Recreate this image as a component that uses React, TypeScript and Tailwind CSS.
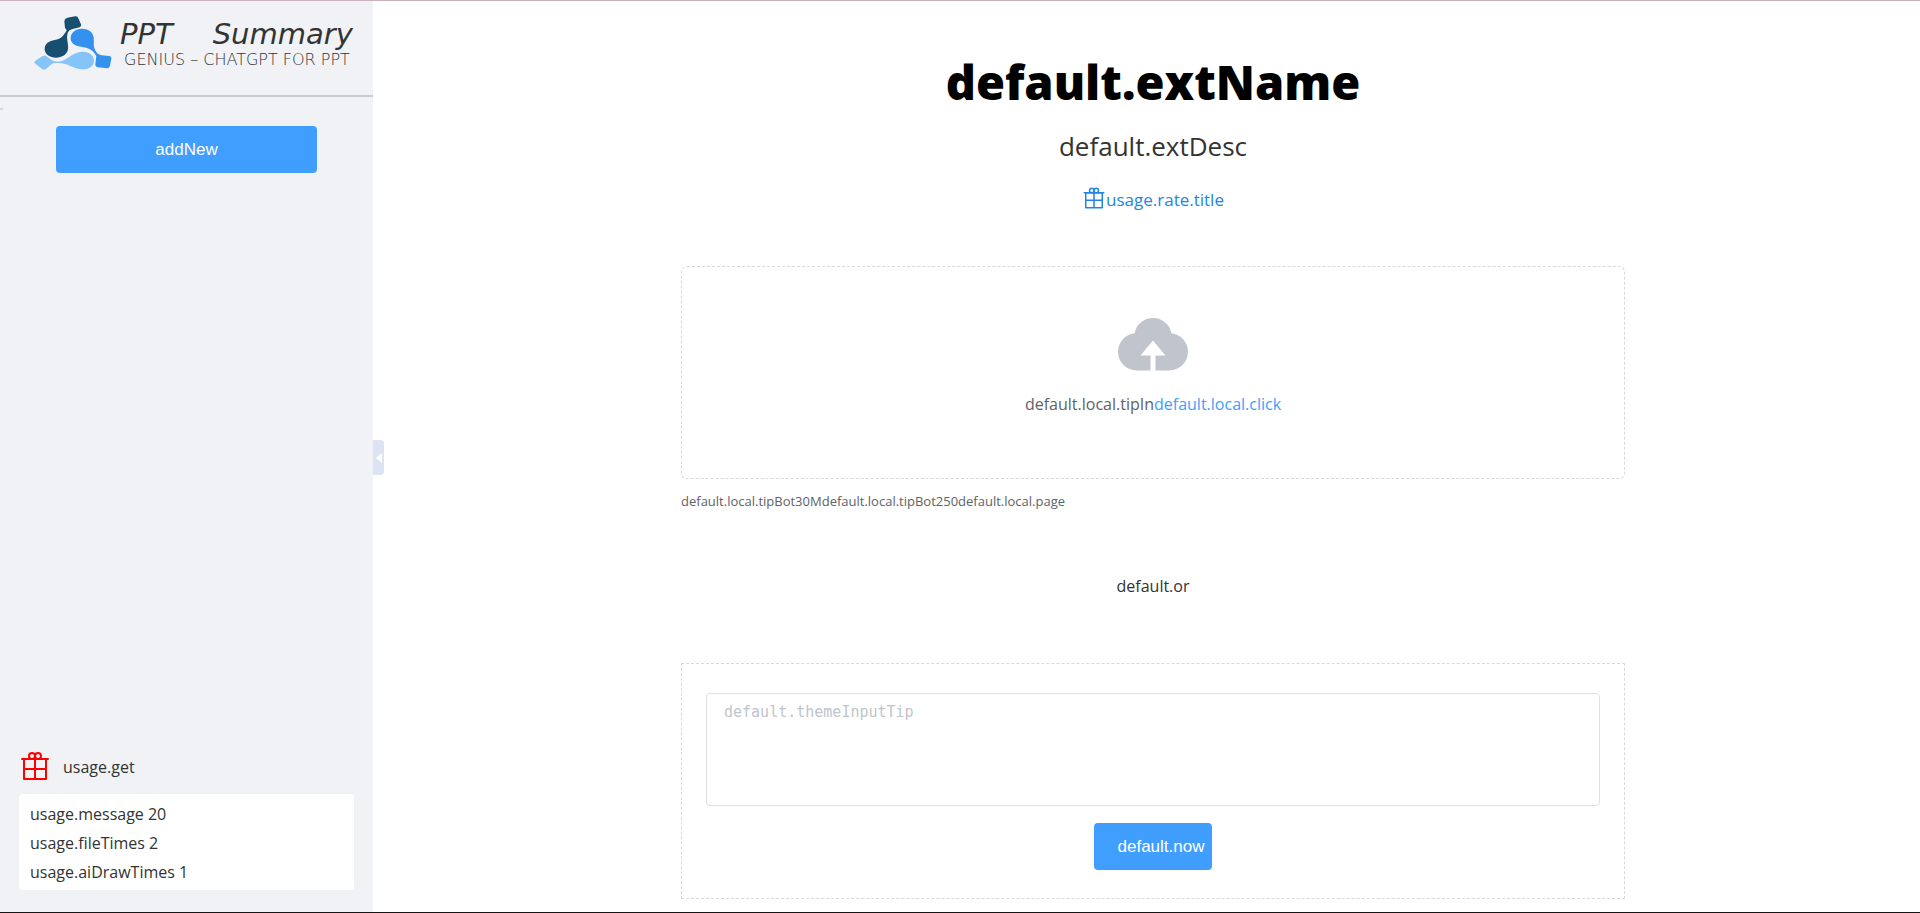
import React from "react";

function GiftIcon({ className }: { className: string }) {
  return (
    <svg viewBox="0 0 1024 1024" fill="currentColor" className={className} aria-hidden="true">
      <path d="M480 896V640H192v-64h288V320H192v576h288zm64 0h288V640H544v256zm0-320h288V320H544v256zM128 256h768v672a32 32 0 0 1-32 32H160a32 32 0 0 1-32-32V256z" fillRule="evenodd" />
      <path d="M96 256h832q32 0 32 32t-32 32H96q-32 0-32-32t32-32z" />
      <path d="M416 256a64 64 0 1 0 0-128 64 64 0 0 0 0 128zm0 64a128 128 0 1 1 0-256 128 128 0 0 1 0 256z" />
      <path d="M608 256a64 64 0 1 0 0-128 64 64 0 0 0 0 128zm0 64a128 128 0 1 1 0-256 128 128 0 0 1 0 256z" />
    </svg>
  );
}

function UploadIcon() {
  return (
    <svg viewBox="0 0 1024 1024" className="size-20 text-[#c0c4cc]" fill="currentColor" aria-hidden="true">
      <path d="M544 864V672h128L512 480 352 672h128v192H320v-1.6c-5.376.32-10.496 1.6-16 1.6A240 240 0 0 1 64 624c0-123.136 93.12-223.488 212.608-237.248A239.808 239.808 0 0 1 512 192a239.872 239.872 0 0 1 235.456 194.752c119.488 13.76 212.48 114.112 212.48 237.248a240 240 0 0 1-240 240c-5.376 0-10.56-1.28-16-1.6v1.6H544z" />
    </svg>
  );
}

function LogoMark() {
  return (
    <svg viewBox="0 0 234 162" className="h-[54px] w-[78px] shrink-0" aria-hidden="true">
      <path
        fill="#174f70"
        d="M91 16 C92 8 99 5 107 4 L124 1 Q131 0 133 7 L141 25 Q143 31 137 34 L113 40 Q104 42 101 51 C96 69 104 82 102 100 C99 116 84 125 66 125 C47 125 32 114 32 99 C32 83 45 75 62 72 C83 69 90 57 98 43 L93 35 Z"
      />
      <path
        fill="#3492ee"
        d="M143 38 C163 37 177 49 179 64 C181 82 175 93 189 111 Q194 117 203 118 L226 120 Q233 121 232 128 L228 149 Q226 157 219 157 L192 154 Q184 153 184 145 L187 120 C177 101 163 95 141 92 C121 90 109 79 110 65 C111 49 124 39 143 38 Z"
      />
      <path
        fill="#85c4f9"
        d="M26 120 Q31 117 36 120 L54 133 Q59 137 71 137 C96 138 112 108 146 107 C167 107 180 119 180 134 C180 150 165 161 144 160 C115 158 99 139 70 141 Q57 140 52 145 L36 159 Q30 163 24 159 L4 143 Q-1 139 4 134 Z"
      />
    </svg>
  );
}

function Logo() {
  return (
    <div className="flex h-[94px] items-start gap-2 pt-[15px] pl-[34px]">
      <LogoMark />
      <div className="font-['DejaVu_Sans',sans-serif] whitespace-nowrap text-[#333333]">
        <div className="flex gap-10 text-[29px] leading-[36px] italic">
          <span>PPT</span>
          <span>Summary</span>
        </div>
        <div className="pl-1 text-base leading-[16px] font-extralight">GENIUS – CHATGPT FOR PPT</div>
      </div>
    </div>
  );
}

const usage = [
  { label: "usage.message", count: 20 },
  { label: "usage.fileTimes", count: 2 },
  { label: "usage.aiDrawTimes", count: 1 },
];

function Sidebar() {
  return (
    <aside className="flex w-[373px] shrink-0 flex-col bg-[#f0f2f6]">
      <header className="border-b-2 border-[#c9cbcc]">
        <Logo />
      </header>
      <div className="mt-[11px] h-0.5 w-[3px] bg-[#d3d6de]" />
      <button
        type="button"
        className="mx-14 mt-4 h-[47px] rounded bg-[#409eff] font-['Liberation_Sans',sans-serif] text-[17px] text-white"
      >
        addNew
      </button>
      <section className="mt-auto px-[19px] pb-[22px]">
        <div className="flex items-center gap-3 pb-3">
          <GiftIcon className="size-8 text-[#ff0000]" />
          <span className="pt-0.5 text-base leading-6">usage.get</span>
        </div>
        <ul className="rounded bg-white px-[11px] pt-[6px] pb-[3px] text-base leading-[29px]">
          {usage.map((item) => (
            <li key={item.label}>
              {item.label} {item.count}
            </li>
          ))}
        </ul>
      </section>
    </aside>
  );
}

export default function App() {
  return (
    <div className="flex min-h-screen border-t border-b border-t-[#c9b3ba] border-b-[#141414] bg-white font-['Open_Sans','Noto_Sans',sans-serif] text-[#333333]">
      <Sidebar />
      <button
        type="button"
        aria-label="Collapse"
        className="mt-0.5 mr-0.5 flex h-[35px] w-[11px] shrink-0 items-center justify-end self-center rounded-r bg-[#dce3f3] pr-0.5"
      >
        <svg viewBox="0 0 6 10" className="h-2.5 w-1.5" fill="#ffffff" aria-hidden="true">
          <path d="M6 0v10L0 5z" />
        </svg>
      </button>
      <main className="flex min-w-0 flex-1 flex-col items-center px-4 pb-3">
        <h1 className="pt-[45px] text-[47px] leading-[72px] font-extrabold text-black">default.extName</h1>
        <p className="mt-2 text-[26px] leading-[40px]">default.extDesc</p>
        <a href="#rate" className="mt-5 flex items-start text-[17px] leading-7 text-[#2285e6]">
          <GiftIcon className="size-6" />
          usage.rate.title
        </a>
        <div className="mt-[52px] w-full max-w-[944px]">
          <button
            type="button"
            className="flex h-[213px] w-full flex-col items-center rounded-md border border-dashed border-[#d9d9d9] pt-9 text-base text-[#606266]"
          >
            <UploadIcon />
            <span className="mt-[9px] leading-6">
              default.local.tipIn<em className="text-[#409eff] not-italic">default.local.click</em>
            </span>
          </button>
          <p className="mt-3 text-[13px] leading-5 text-[#606266]">
            default.local.tipBot30Mdefault.local.tipBot250default.local.page
          </p>
          <p className="mt-[63px] text-center text-base leading-6 font-medium">default.or</p>
          <form className="mt-[65px] flex flex-col items-center border border-dashed border-[#d9d9d9] px-6 pt-[29px] pb-7">
            <textarea
              aria-label="default.themeInputTip"
              placeholder="default.themeInputTip"
              className="h-[113px] w-full resize-none rounded border border-[#dcdfe6] px-[17px] py-2 font-['DejaVu_Sans_Mono',monospace] text-[15px] leading-5 placeholder:text-[#c0c4cc]"
            />
            <button
              type="button"
              className="mt-[17px] h-[47px] rounded bg-[#409eff] pr-2 pl-6 font-['Liberation_Sans',sans-serif] text-[17px] text-white"
            >
              default.now
            </button>
          </form>
        </div>
      </main>
    </div>
  );
}
